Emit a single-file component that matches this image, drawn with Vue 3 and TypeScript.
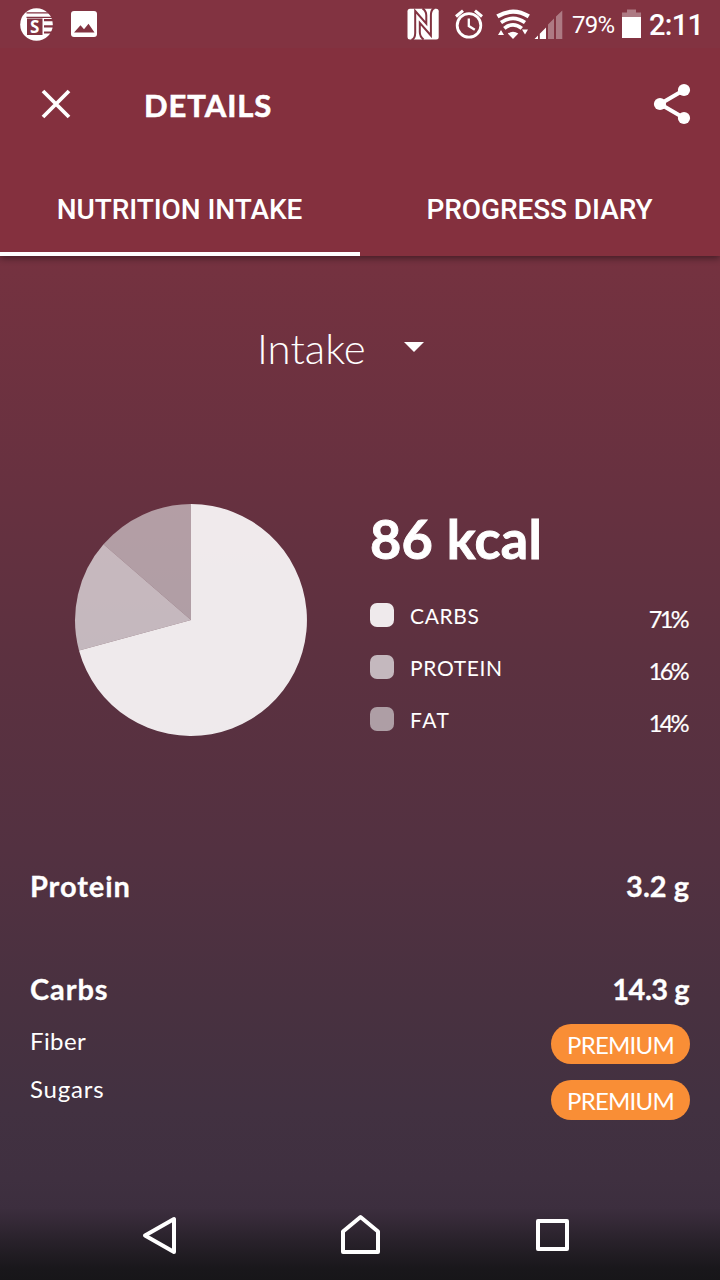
<script setup lang="ts">
interface Slice {
  label: string
  percent: string
  color: string
  path: string
}

const slices: Slice[] = [
  { label: 'CARBS', percent: '71%', color: 'rgba(255,255,255,.9)', path: 'M117 116V0A116 116 0 1 1 5 146.4Z' },
  { label: 'PROTEIN', percent: '16%', color: 'rgba(250,255,255,.66)', path: 'M117 116L5 146.4A116 116 0 0 1 29.5 40.3Z' },
  { label: 'FAT', percent: '14%', color: 'rgba(250,255,255,.53)', path: 'M117 116L29.5 40.3A116 116 0 0 1 117 0Z' },
]
const tabs = ['NUTRITION INTAKE', 'PROGRESS DIARY']
const premiumRows = ['Fiber', 'Sugars']
</script>

<template>
  <div class="screen">
    <header class="top">
      <div class="status">
        <svg class="status-left" width="110" height="48" viewBox="0 0 110 48">
          <circle cx="36.5" cy="24.5" r="16.3" fill="#fff" />
          <g stroke="#823341" fill="none">
            <path d="M26.5 12.8H53M26.5 17.3H53" stroke-width="1.3" />
            <path d="M44 20.2H54M44 26.3H54M44 32.5H54" stroke-width="2.2" />
          </g>
          <rect x="27" y="18.5" width="15.5" height="16.5" fill="#823341" />
          <text x="34.8" y="33" class="badge-letter">S</text>
          <rect x="71" y="11" width="26" height="26" rx="3" fill="#fff" />
          <path d="M74 32.5L80.5 25.3L84 29.3L88.5 23.7L94.5 32.5Z" fill="#823341" />
        </svg>
        <div class="status-right">
          <svg width="170" height="48" viewBox="400 0 170 48">
            <rect x="407.5" y="8.8" width="31.2" height="30.6" rx="2.5" fill="#fff" />
            <g fill="none" stroke="#823341" stroke-width="2">
              <path d="M411.5 40Q415.2 38.5 415.2 33V11L426.3 23.7V15.5Q426.3 11 422.5 8.4" />
              <path d="M434.6 8Q430.9 9.5 430.9 15V35.5L419.8 22.8V32Q419.8 36.5 423.6 39.6" />
            </g>
            <g fill="none" stroke="#fff">
              <circle cx="469" cy="25.4" r="11.8" stroke-width="2.8" />
              <path d="M468.8 18.5V26L474.8 29.8" stroke-width="2.3" />
              <path d="M456 16.5L463 10.6M475 10.6L482 16.5" stroke-width="3" />
              <path d="M497.4 16.4Q513 6.8 528.8 16.4" stroke-width="4.2" />
              <path d="M501 22.6Q513 14.2 525 22.6" stroke-width="3.7" />
              <path d="M504.3 28.4Q513 21.2 521.8 28.4" stroke-width="3.7" />
            </g>
            <g fill="#fff">
              <path d="M507.8 33.6Q513 29.8 518.3 33.6L513 39Z" />
              <path d="M498 35L501 30L504 35ZM522 29.5H528L525 34.5Z" />
              <path d="M534.5 39L538 35.5V39ZM539.8 39V33.8L546 27.5V39Z" />
              <path d="M548 39V24.5L554 18.5V39ZM556 39V16.5L562.3 10.5V39Z" opacity=".35" />
            </g>
          </svg>
          <span class="battery-text">79%</span>
          <svg class="battery" width="20" height="48" viewBox="0 0 20 48">
            <path d="M1 12.5H6V9.5H15V12.5H20V17H1Z" fill="#fff" opacity=".35" />
            <path d="M1 17H20V38H1Z" fill="#fff" />
          </svg>
          <span class="clock">2:11</span>
        </div>
      </div>
      <div class="toolbar">
        <svg class="close" width="30" height="30" viewBox="0 0 30 30">
          <path d="M2 2L28 28M28 2L2 28" stroke="#fff" stroke-width="3.8" />
        </svg>
        <h1>DETAILS</h1>
        <svg class="share" width="38" height="42" viewBox="0 0 38 42">
          <path d="M31 7L7 21L31 35" fill="none" stroke="#fff" stroke-width="4" />
          <g fill="#fff"><circle cx="31" cy="7" r="6.1" /><circle cx="7" cy="21" r="6.1" /><circle cx="31" cy="35" r="6.1" /></g>
        </svg>
      </div>
      <nav class="tabs">
        <div v-for="(tab, i) in tabs" :key="tab" class="tab" :class="{ active: i === 0 }">
          <span>{{ tab }}</span>
        </div>
      </nav>
    </header>

    <div class="picker">
      <span>Intake</span>
      <svg width="20" height="10" viewBox="0 0 20 10"><path d="M0 0H20L10 10Z" fill="#fff" /></svg>
    </div>

    <section class="summary">
      <svg class="pie" width="233" height="233" viewBox="0 0 233 233">
        <path v-for="s in slices" :key="s.label" :d="s.path" :fill="s.color" />
      </svg>
      <div class="legend">
        <div class="kcal">86 kcal</div>
        <div v-for="s in slices" :key="s.label" class="legend-row">
          <i class="swatch" :style="{ background: s.color }"></i>
          <span class="legend-label" :class="s.label.toLowerCase()">{{ s.label }}</span>
          <span class="percent">{{ s.percent }}</span>
        </div>
      </div>
    </section>

    <section class="details">
      <div class="total protein-total"><span class="name">Protein</span><span class="amount">3.2 g</span></div>
      <div class="total"><span class="name">Carbs</span><span class="amount long">14.3 g</span></div>
      <div v-for="row in premiumRows" :key="row" class="sub">
        <span class="sub-name" :class="row.toLowerCase()">{{ row }}</span>
        <span class="premium"><span>PREMIUM</span></span>
      </div>
    </section>

    <footer class="system-nav">
      <svg width="720" height="90" viewBox="0 1190 720 90" fill="none" stroke="#fff" stroke-width="4" stroke-linejoin="round">
        <path d="M145 1235.5L174 1219V1252Z" />
        <path d="M343 1252V1231.5L360.5 1217L378 1231.5V1252Z" />
        <path d="M538 1221H567V1249H538Z" />
      </svg>
    </footer>
  </div>
</template>

<style>
body { margin: 0; }
</style>

<style scoped>
.screen {
  width: 720px;
  height: 1280px;
  display: flex;
  flex-direction: column;
  overflow: hidden;
  color: #fff;
  font-family: Lato, "Open Sans", sans-serif;
  background: linear-gradient(#84303e 0, #753240 256px, #673140 490px, #5c3140 660px, #533141 850px, #483140 1010px, #423141 1110px, #3f3040 1180px, #3c2e3e 1210px);
}
svg { display: block; flex: none; }
.top {
  height: 256px;
  flex: none;
  background: #84303e;
  box-shadow: 0 2px 7px rgba(0, 0, 0, .45);
}
.status {
  height: 48px;
  display: flex;
  justify-content: space-between;
  background: #823341;
  font-family: Roboto, sans-serif;
}
.badge-letter { font: 700 17px "Open Sans", sans-serif; fill: #fff; text-anchor: middle; }
.status-right { display: flex; width: 320px; align-items: center; }
.battery-text { width: 51px; font-size: 24px; letter-spacing: -.7px; padding: 2px 0 0 2px; box-sizing: border-box; white-space: nowrap; }
.clock { margin-left: 8px; font-size: 29px; font-weight: 500; line-height: 48px; letter-spacing: -.7px; padding-top: 2px; }
.toolbar { height: 112px; display: flex; align-items: center; padding: 0 29px 0 41px; }
.toolbar h1 { margin: 2px 0 0 73px; flex: 1; font-size: 31px; font-weight: 700; line-height: 40px; letter-spacing: .95px; -webkit-text-stroke: .6px #fff; }
.tabs { height: 96px; display: flex; }
.tab {
  flex: 1;
  display: flex;
  justify-content: center;
  padding-top: 33px;
  box-sizing: border-box;
  font: 500 28px/34px Roboto, sans-serif;
  letter-spacing: -.08px;
}
.tab span { margin-right: 1px; }
.active { border-bottom: 4px solid #fff; }
.picker { height: 60px; margin: 59px 0 0 257px; display: flex; align-items: center; }
.picker span { width: 147px; font-size: 42px; font-weight: 300; line-height: 60px; padding-top: 5px; }
.picker svg { margin-top: 4px; }
.summary { margin: 129px 32px 0 74px; display: flex; height: 234px; }
.pie { margin-right: 63px; }
.legend { flex: 1; }
.kcal { height: 99px; font-size: 54px; font-weight: 700; line-height: 70px; letter-spacing: .3px; white-space: nowrap; -webkit-text-stroke: .9px #fff; }
.legend-row { height: 52px; display: flex; align-items: flex-start; }
.swatch { width: 24px; height: 24px; border-radius: 7px; }
.legend-label { margin-left: 16px; flex: 1; font-size: 21px; line-height: 26px; letter-spacing: .65px; }
.fat { letter-spacing: 1.5px; }
.percent { font-size: 23.5px; line-height: 32px; letter-spacing: -2.6px; margin-right: 2.6px; -webkit-text-stroke: .2px #fff; }
.percent { margin-right: 3px; transform: translateX(2px); }
.details { margin-top: 121px; padding: 0 30px; }
.total { height: 62px; display: flex; justify-content: space-between; font-size: 29px; font-weight: 700; line-height: 54px; -webkit-text-stroke: .3px #fff; }
.name { letter-spacing: .9px; }
.amount { letter-spacing: 0; margin-right: 1px; }
.long { letter-spacing: -.5px; }
.protein-total { height: 103px; }
.sub { height: 56px; display: flex; justify-content: space-between; align-items: flex-start; font-size: 24px; }
.sub-name { line-height: 34px; letter-spacing: .4px; }
.sugars { margin-top: -8px; letter-spacing: .8px; }
.premium { width: 139px; height: 40px; border-radius: 20px; background: #f98e36; display: flex; justify-content: center; line-height: 42px; letter-spacing: -.75px; }
.system-nav { height: 90px; margin-top: auto; flex: none; background: linear-gradient(transparent 18px, rgba(20, 20, 22, .22) 34px, rgba(20, 20, 22, .55) 55px, rgba(20, 20, 22, .87) 78px, rgba(20, 20, 22, .92) 90px); }
</style>
